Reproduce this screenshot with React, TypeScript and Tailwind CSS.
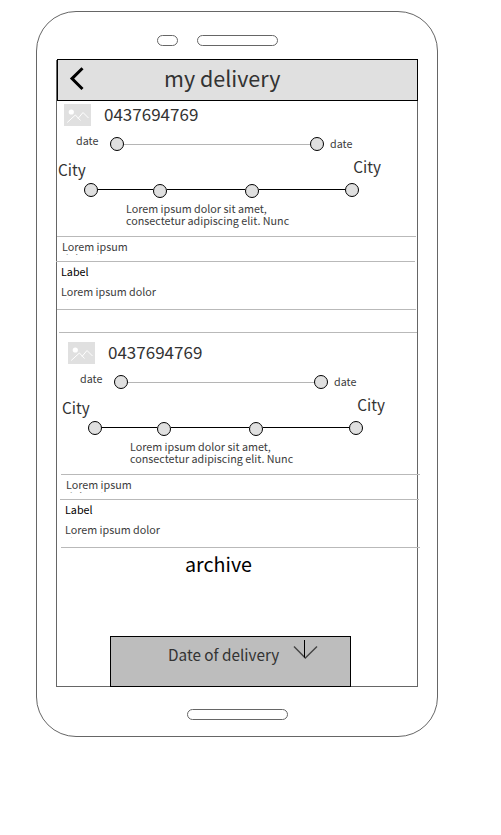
import React from "react";

const Dot = ({ className = "" }: { className?: string }) => (
  <div className={`size-[14px] shrink-0 rounded-full border border-black bg-[#e0e0e0] ${className}`} />
);

const Track = ({ className }: { className: string }) => (
  <div className={`h-px shrink-0 ${className}`} />
);

const Thumbnail = () => (
  <svg width="27" height="22" viewBox="0 0 27 22" className="shrink-0 bg-[#e0e0e0]">
    <circle cx="7.3" cy="8" r="2.6" fill="#fff" />
    <path d="M3.2 18.5L11.4 11L16.5 16.5M14 14.5L19 8.5L24.5 14" fill="none" stroke="#fff" strokeWidth="1" />
  </svg>
);

const Delivery = ({ className = "" }: { className?: string }) => (
  <section className={`h-[209px] w-[360px] shrink-0 text-[#3c3c3c] ${className}`}>
    <div className="flex h-[29px] pl-[7px] pt-[3px]">
      <Thumbnail />
      <span className="ml-[13px] text-[17px] leading-[20px] text-[#333]">0437694769</span>
    </div>
    <div className="flex h-[28px] pt-[7px] text-[10.75px] leading-[14px]">
      <span className="-mt-[3px] ml-[19px] w-[34px]">date</span>
      <Dot />
      <Track className="mt-[7px] w-[186px] bg-[#b5b5b5]" />
      <Dot />
      <span className="ml-[6px]">date</span>
    </div>
    <div className="-mt-[2px] flex h-[27px] justify-between pl-px pr-[36px] text-[15.3px] leading-[20px] text-[#333]">
      <span className="pt-[3px]">City</span>
      <span>City</span>
    </div>
    <div className="flex h-[20px] pl-[27px]">
      <Dot />
      <Track className="mt-[6px] w-[55px] bg-black" />
      <Dot className="mt-px" />
      <Track className="mt-[6px] w-[78px] bg-black" />
      <Dot className="mt-px" />
      <Track className="mt-[6px] w-[86px] bg-black" />
      <Dot />
    </div>
    <p className="h-[33px] whitespace-nowrap pl-[69px] text-[10.75px] leading-[12px]">
      Lorem ipsum dolor sit amet,
      <br />
      consectetur adipiscing elit. Nunc
    </p>
    <div className="h-px w-[359px] bg-[#b9b9b9]" />
    <div className="h-[24px] pl-[5px] pt-[4px]">
      <p className="h-[14px] w-[80px] overflow-hidden text-[10.75px] leading-[12px]">
        Lorem ipsum
        <br />
        dolor sit
      </p>
    </div>
    <div className="-ml-px h-px w-[359px] bg-[#b9b9b9]" />
    <div className="h-[47px] pl-[4px] pt-[4px] text-[10.75px] leading-[12px]">
      <p className="text-black">Label</p>
      <p className="mt-[8px] h-[14px] w-[110px] overflow-hidden">
        Lorem ipsum dolor
        <br />
        sit amet
      </p>
    </div>
    <div className="h-px w-[359px] bg-[#b9b9b9]" />
  </section>
);

export default function App() {
  return (
    <main className="h-[835px] w-[501px] overflow-hidden bg-white pl-[36px] pt-[11px] font-['Noto_Sans_CJK_SC','Open_Sans',sans-serif]">
      <div className="flex h-[726px] w-[402px] flex-col rounded-[40px] border border-[#666] pt-[23px]">
        <div className="flex h-[11px] shrink-0 gap-[19px] pl-[120px]">
          <div className="w-[21px] rounded-full border border-[#666]" />
          <div className="w-[81px] rounded-full border border-[#666]" />
        </div>

        <div className="ml-[19px] mt-[14px] flex h-[627px] w-[362px] shrink-0 flex-col border-x border-b border-[#666]">
          <header className="-mt-px flex h-[42px] w-[361px] shrink-0 border border-black bg-[#e0e0e0] pl-[10px]">
            <svg width="18" height="26" viewBox="0 0 18 26" className="mt-[6px] shrink-0" fill="none" stroke="#000" strokeWidth="3">
              <path d="M14.5 2.2L4 12.6L14.5 23" />
            </svg>
            <h1 className="ml-[78px] whitespace-nowrap text-[21.5px] leading-[35px] text-[#333]">my delivery</h1>
          </header>

          <Delivery />
          <div className="ml-[2px] mt-[22px] h-px shrink-0 bg-[#b9b9b9]" />
          <Delivery className="ml-[4px] mt-[6px]" />

          <h2 className="ml-[128px] mt-px text-[19.7px] leading-[30px] text-black">archive</h2>

          <button className="-mb-px ml-[53px] mt-auto flex h-[51px] w-[241px] shrink-0 border border-black bg-[#bdbdbd] pl-[57px] text-[#333]">
            <span className="mt-[6px] w-[125px] whitespace-nowrap text-left text-[15.3px] leading-[23px]">Date of delivery</span>
            <svg width="25" height="20" viewBox="0 0 25 20" className="mt-[3px]" fill="none">
              <path d="M1 6.5L12.3 18L24 6.5" stroke="#444" strokeWidth="1.4" />
              <path d="M11.5 0V17.5" stroke="#000" />
            </svg>
          </button>
        </div>

        <div className="ml-[150px] mt-[22px] h-[11px] w-[101px] shrink-0 rounded-full border border-[#666]" />
      </div>
    </main>
  );
}
